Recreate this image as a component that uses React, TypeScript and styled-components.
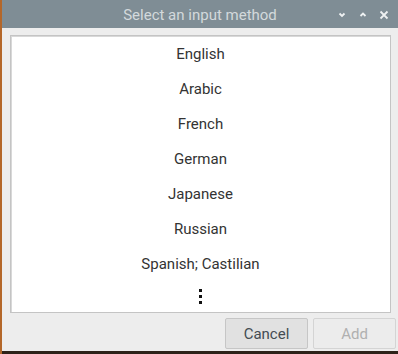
import React from "react";
import styled, { createGlobalStyle } from "styled-components";

const Global = createGlobalStyle`
  html, body { margin: 0; padding: 0; }
  body { font-family: Roboto, "Liberation Sans", sans-serif; background: #3a2a1c; }
`;

const Desktop = styled.div`
  width: 398px;
  height: 354px;
  display: flex;
  flex-direction: column;
  background: linear-gradient(90deg, #b4672a 0, #b4672a 2px, #2e2219 2px);
  overflow: hidden;
`;

const Window = styled.div`
  margin-left: 2px;
  width: 396px;
  height: 351px;
  display: flex;
  flex-direction: column;
  background: #ededed;
`;

const TitleBar = styled.div`
  height: 28px;
  flex: none;
  background: #7f8d95;
  display: flex;
  align-items: center;
  position: relative;
`;

const Title = styled.div`
  flex: 1;
  text-align: center;
  color: #d3d9dc;
  font-size: 15px;
  padding-top: 2px;
`;

const Controls = styled.div`
  position: absolute;
  right: 8px;
  top: 9px;
  display: flex;
  gap: 9px;
`;

const Ctl = styled.svg`
  width: 12px;
  height: 12px;
  display: block;
`;

const Content = styled.div`
  flex: 1;
  display: flex;
  flex-direction: column;
  padding: 7px 2px 2px 8px;
  gap: 5px;
`;

const List = styled.div`
  height: 278px;
  margin-right: 5px;
  background: #ffffff;
  border: 1px solid #c4c4c4;
  box-shadow: inset 1px 1px 0 #d8d8d8;
  display: flex;
  flex-direction: column;
  align-items: center;
  padding-top: 9px;
  box-sizing: border-box;
`;

const Item = styled.div`
  height: 35px;
  line-height: 19px;
  font-size: 15px;
  color: #333333;
`;

const Dots = styled.div`
  display: flex;
  flex-direction: column;
  gap: 3px;
  margin-top: -1px;
`;

const Dot = styled.span`
  width: 3px;
  height: 3px;
  background: #111;
  display: block;
`;

const Buttons = styled.div`
  display: flex;
  justify-content: flex-end;
  gap: 5px;
`;

const Button = styled.button<{ $disabled?: boolean }>`
  width: 83px;
  height: 31px;
  font-family: Roboto, "Liberation Sans", sans-serif;
  font-size: 15px;
  border: 1px solid ${(p) => (p.$disabled ? "#d4d4d4" : "#c6c6c6")};
  border-radius: 2px;
  background: ${(p) => (p.$disabled ? "#ececec" : "#e1e1e1")};
  color: ${(p) => (p.$disabled ? "#b0b0b0" : "#444c52")};
  padding: 0;
`;

const items = ["English", "Arabic", "French", "German", "Japanese", "Russian", "Spanish; Castilian"];

export default function App() {
  return (
    <Desktop>
      <Global />
      <Window>
        <TitleBar>
          <Title>Select an input method</Title>
          <Controls>
            <Ctl viewBox="0 0 12 12">
              <path d="M3.5 4.5 L6 7 L8.5 4.5" stroke="#eef1f2" strokeWidth="1.8" fill="none" />
            </Ctl>
            <Ctl viewBox="0 0 12 12">
              <path d="M3.5 7 L6 4.5 L8.5 7" stroke="#eef1f2" strokeWidth="1.8" fill="none" />
            </Ctl>
            <Ctl viewBox="0 0 12 12">
              <path d="M2.5 2.5 L9.5 9.5 M9.5 2.5 L2.5 9.5" stroke="#eef1f2" strokeWidth="1.8" fill="none" />
            </Ctl>
          </Controls>
        </TitleBar>
        <Content>
          <List>
            {items.map((t) => (
              <Item key={t}>{t}</Item>
            ))}
            <Dots>
              <Dot />
              <Dot />
              <Dot />
            </Dots>
          </List>
          <Buttons>
            <Button>Cancel</Button>
            <Button $disabled>Add</Button>
          </Buttons>
        </Content>
      </Window>
    </Desktop>
  );
}
